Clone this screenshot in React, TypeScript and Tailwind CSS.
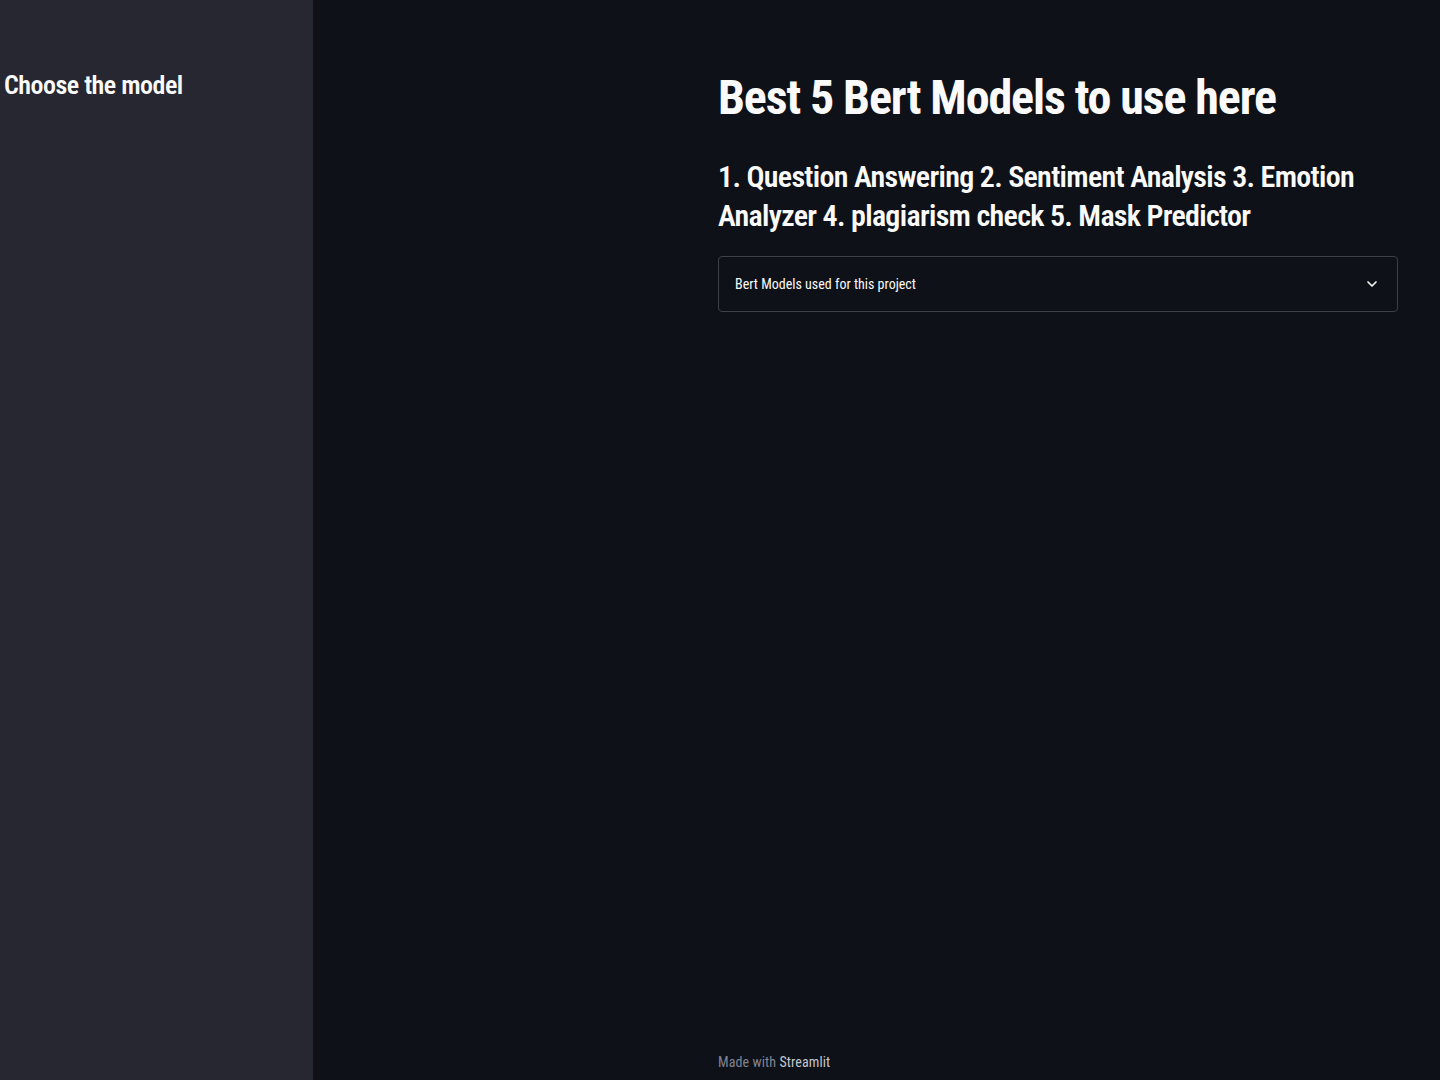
import React from 'react'

const font = { fontFamily: '"Liberation Sans Narrow", "Roboto Condensed", "Noto Sans", sans-serif' }

export default function App() {
    return (
        <div className="flex h-[1080px] w-full bg-[#0e1117] text-white" style={font}>
            {/* sidebar */}
            <aside className="w-[313px] shrink-0 bg-[#262730] pt-[69px] pl-[4px]">
                <h2 className="text-[26px] font-semibold leading-[32px] tracking-[-0.5px] text-[#fafafa]">Choose the model</h2>
            </aside>

            {/* main */}
            <main className="flex flex-1 flex-col pl-[405px] pr-[42px]">
                <h1 className="pt-[70px] text-[48px] font-bold leading-[56px] tracking-[-1.1px] text-[#fafafa]">
                    Best 5 Bert Models to use here
                </h1>
                <h3 className="mt-[31px] text-[30px] font-semibold leading-[39px] tracking-[-0.7px] text-[#fafafa]">
                    1. Question Answering 2. Sentiment Analysis 3. Emotion Analyzer 4. plagiarism check 5. Mask Predictor
                </h3>
                <div className="mt-[21px] flex h-[56px] items-center justify-between rounded-[4px] border border-[#3d3f4a] px-[16px]">
                    <span className="text-[14px] text-[#fafafa]">Bert Models used for this project</span>
                    <svg width="16" height="16" viewBox="0 0 24 24" fill="none" stroke="#fafafa" strokeWidth="2.5" strokeLinecap="round" strokeLinejoin="round" className="mr-[1px]">
                        <path d="M6 9l6 6 6-6" />
                    </svg>
                </div>
                <div className="mt-auto pb-[7px] text-[14px] tracking-[0.1px] text-[#808495]">
                    Made with <span className="text-[#c4c6cf]">Streamlit</span>
                </div>
            </main>
        </div>
    )
}
